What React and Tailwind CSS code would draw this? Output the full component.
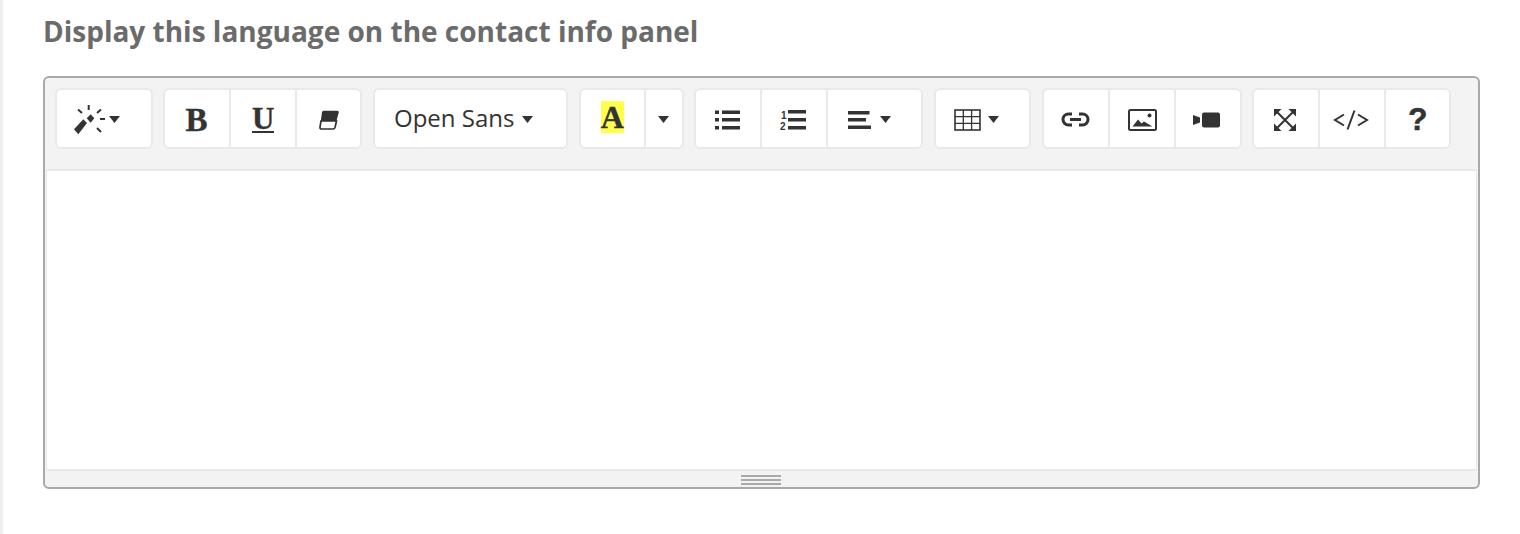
const Caret = ({ className = "" }) => (
  <svg width="11" height="7" viewBox="0 0 11 7" className={className}>
    <path d="M0 0H11L5.5 7Z" fill="#333" />
  </svg>
);

const Btn = ({ w = 66, children, className = "justify-center" }) => (
  <div
    style={{ width: w }}
    className={`flex h-full items-center border-l-2 border-[#e9e9e9] pt-[2px] first:border-l-0 text-[#333] ${className}`}
  >
    {children}
  </div>
);

const Group = ({ children }) => (
  <div className="flex h-[61px] rounded-md border-2 border-[#e9e9e9] bg-white">{children}</div>
);

const Wand = () => (
  <svg width="34" height="30" viewBox="0 0 34 30" fill="none">
    <path d="M0 24.300L9.300 14.300L13 18L4.300 29.300Z" fill="#333" />
    <path d="M12.700 13.300L16.700 9.300L20.300 13.300L16.700 17.700Z" fill="#333" />
    <path d="M14.700 0V5M4 4.500L8 8M27 4.500L23 8M26 14H31M23 23L27 27" stroke="#333" strokeWidth="2" />
  </svg>
);

const Eraser = () => (
  <svg width="20" height="20" viewBox="0 0 20 20" fill="none">
    <path d="M4.500 0.700H18.500Q20 0.700 19.700 2.300L17.500 11H1.800L3 2.200Q3.300 0.700 4.500 0.700Z" fill="#333" />
    <path d="M2 11H17.500L16 17.500Q15.500 19 14 19H2.500Q0.800 19 1 17Z" fill="#fff" stroke="#333" strokeWidth="1.700" />
  </svg>
);

const UL = () => (
  <svg width="25" height="20" viewBox="0 0 25 20" fill="#333">
    <rect x="0" y="0.500" width="4" height="3.500" />
    <rect x="7" y="0.500" width="18" height="3.500" />
    <rect x="0" y="8" width="4" height="3.500" />
    <rect x="7" y="8" width="18" height="3.500" />
    <rect x="0" y="16" width="4" height="3.500" />
    <rect x="7" y="16" width="18" height="3.500" />
  </svg>
);

const OL = () => (
  <svg width="26" height="22" viewBox="0 0 26 22" fill="#333">
    <text x="1" y="9.500" fontSize="10" fontWeight="700" fontFamily="Liberation Sans, sans-serif">1</text>
    <text x="0" y="21" fontSize="10" fontWeight="700" fontFamily="Liberation Sans, sans-serif">2</text>
    <rect x="8" y="1" width="18" height="3.500" />
    <rect x="8" y="9" width="18" height="3.500" />
    <rect x="8" y="17" width="18" height="3.500" />
  </svg>
);

const Align = () => (
  <svg width="23" height="18" viewBox="0 0 23 18" fill="#333">
    <rect x="0" y="0" width="21.500" height="3.500" />
    <rect x="0" y="7" width="18" height="3.500" />
    <rect x="0" y="14.500" width="23" height="3.500" />
  </svg>
);

const Table = () => (
  <svg width="27" height="22" viewBox="0 0 27 22" fill="none" stroke="#333" strokeWidth="1.300">
    <rect x="1" y="1" width="25" height="20" strokeWidth="1.600" />
    <path d="M9.300 1V21M17.600 1V21M1 7.600H26M1 14.300H26" />
  </svg>
);

const LinkIcon = () => (
  <svg width="29" height="15" viewBox="0 0 29 15" fill="none" stroke="#333" strokeWidth="3">
    <path d="M11 2H7.500A5.500 5.500 0 0 0 7.500 13H11" />
    <path d="M18 2H21.500A5.500 5.500 0 0 1 21.500 13H18" />
    <path d="M9 7.500H20" />
  </svg>
);

const Picture = () => (
  <svg width="29" height="22" viewBox="0 0 29 22" fill="none">
    <rect x="1" y="1" width="27" height="20" rx="1.500" stroke="#333" strokeWidth="2" />
    <circle cx="21.500" cy="6.500" r="2" fill="#333" />
    <path d="M4.500 17.500L10 10.500L13.500 14.500L16 12.500L24.500 17.500Z" fill="#333" />
  </svg>
);

const Video = () => (
  <svg width="27" height="16" viewBox="0 0 27 16" fill="#333">
    <path d="M0 3L7 5.500V10.500L0 13Z" />
    <rect x="9" y="0.500" width="18" height="15" rx="2" />
  </svg>
);

const Expand = () => (
  <svg width="22" height="22" viewBox="0 0 22 22" fill="#333">
    <path d="M3 3L19 19M19 3L3 19" stroke="#333" strokeWidth="2" />
    <path d="M0 0H7.500L0 7.500ZM22 0V7.500L14.500 0ZM0 22V14.500L7.500 22ZM22 22H14.500L22 14.500Z" />
  </svg>
);

const Code = () => (
  <svg width="36" height="22" viewBox="0 0 36 22" fill="none" stroke="#333" strokeWidth="2">
    <path d="M11 5.500L2 11L11 16.500M25 5.500L34 11L25 16.500M21.500 1.500L14.500 20.500" />
  </svg>
);

const boldSerif = "font-['Liberation_Serif',serif] font-bold [-webkit-text-stroke:0.4px_#333]";

export default function App() {
  return (
    <div className="flex h-[534px] w-[1520px] overflow-hidden bg-white font-['Open_Sans',sans-serif]">
      <div className="w-[3px] shrink-0 bg-[#eeeeee]" />
      <div className="flex-1 pl-[40px] pr-[40px]">
        <h1 className="mb-[26px] mt-[12px] h-[38px] text-[28px] font-bold leading-[38px] text-[#6b6b6b]">
          Display this language on the contact info panel
        </h1>
        <div className="flex h-[413px] flex-col rounded-md border-2 border-[#a9a9a9] bg-[#f3f3f3]">
          <div className="flex h-[91px] shrink-0 items-start gap-[10.9px] pl-[10px] pt-[10px]">
            <Group>
              <Btn w={93.5} className="justify-start gap-px pl-[17px]">
                <Wand />
                <Caret />
              </Btn>
            </Group>
            <Group>
              <Btn w={64} className="justify-center pr-[2px]">
                <span className={`${boldSerif} mt-[1px] text-[33px] leading-none`}>B</span>
              </Btn>
              <Btn w={65.7}>
                <span className={`${boldSerif} border-b-2 border-[#333] text-[31px] leading-[24px]`}>U</span>
              </Btn>
              <Btn w={65}><Eraser /></Btn>
            </Group>
            <Group>
              <Btn w={190.7} className="justify-start gap-[8px] pl-[19px]">
                <span className="-mt-[4px] text-[24px] leading-none">Open Sans</span>
                <Caret />
              </Btn>
            </Group>
            <Group>
              <Btn w={63.7}>
                <span className={`${boldSerif} -mt-[5px] bg-[#ffff4d] text-[32px] leading-[32px]`}>A</span>
              </Btn>
              <Btn w={37.3}><Caret /></Btn>
            </Group>
            <Group>
              <Btn w={63.3} className="justify-center pr-[2px]"><UL /></Btn>
              <Btn w={66} className="justify-center pr-[2px]"><OL /></Btn>
              <Btn w={95.3} className="justify-start gap-[9px] pl-[20px]"><Align /><Caret /></Btn>
            </Group>
            <Group>
              <Btn w={93.4} className="justify-start gap-[7px] pl-[18px]"><Table /><Caret /></Btn>
            </Group>
            <Group>
              <Btn w={64} className="justify-center pr-[2px]"><LinkIcon /></Btn>
              <Btn w={66}><Picture /></Btn>
              <Btn w={65.4} className="justify-center pr-[2px]"><Video /></Btn>
            </Group>
            <Group>
              <Btn w={63.6} className="justify-center pr-[2px]"><Expand /></Btn>
              <Btn w={66} className="justify-center pr-[2px]"><Code /></Btn>
              <Btn w={65.4}>
                <span className="-mt-[2px] font-['Liberation_Sans',sans-serif] text-[32px] font-bold leading-none [-webkit-text-stroke:0.4px_#333]">?</span>
              </Btn>
            </Group>
          </div>
          <div className="mx-px h-[302px] shrink-0 rounded-[2px] border-x border-y-2 border-[#e9e9e9] bg-white" />
          <div className="flex flex-1 flex-col items-center justify-center gap-[2px] pr-px pt-[2px]">
            <div className="h-[2px] w-[40px] bg-[#a9a9a9]" />
            <div className="h-[2px] w-[40px] bg-[#a9a9a9]" />
            <div className="h-[2px] w-[40px] bg-[#a9a9a9]" />
          </div>
        </div>
      </div>
    </div>
  );
}
